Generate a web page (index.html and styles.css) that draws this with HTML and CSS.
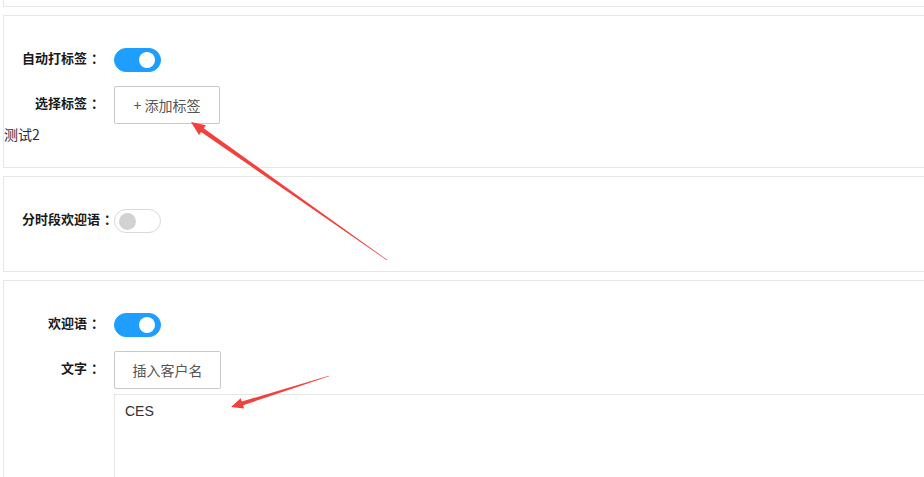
FILE: index.html
```html
<!DOCTYPE html>
<html lang="zh-CN">
  <head>
    <meta charset="UTF-8" />
    <meta name="viewport" content="width=device-width, initial-scale=1.0" />
    <title>欢迎语设置</title>
    <link rel="stylesheet" href="styles.css">
  </head>
  <body>
    <div class="page">
      <div class="card card-cut"></div>

      <div class="card card-tags">
        <div class="form-item">
          <label class="form-label">自动打标签<span class="colon">：</span></label>
          <span class="switch on"><i></i></span>
        </div>
        <div class="form-item">
          <label class="form-label">选择标签<span class="colon">：</span></label>
          <button class="btn btn-tag">+ 添加标签</button>
        </div>
        <div class="tag-text">测试2</div>
      </div>

      <div class="card card-period">
        <div class="form-item">
          <label class="form-label">分时段欢迎语<span class="colon">：</span></label>
          <span class="switch"><i></i></span>
        </div>
      </div>

      <div class="card card-welcome">
        <div class="form-item">
          <label class="form-label">欢迎语<span class="colon">：</span></label>
          <span class="switch on"><i></i></span>
        </div>
        <div class="form-item">
          <label class="form-label">文字<span class="colon">：</span></label>
          <button class="btn btn-name">插入客户名</button>
        </div>
        <div class="form-item form-item-text">
          <label class="form-label"></label>
          <textarea class="welcome-text">CES</textarea>
        </div>
      </div>
    </div>

    <!-- screenshot annotation arrows -->
    <svg class="marks" width="924" height="477" viewBox="0 0 924 477">
      <polygon points="191,122 205.9,125.2 203.7,128.3 387.2,259.8 386.8,260.2 201.1,131.9 199,135" />
      <polygon points="231,407 240.7,398.2 241.8,401.5 328.9,375.7 329.1,376.3 243,405.3 244.1,408.6" />
    </svg>
  </body>
</html>
```

FILE: styles.css
```css
html,
body {
  margin: 0;
  padding: 0;
  overflow: hidden;
  height: 100%;
  background: #fff;
}

body {
  font-family: "Noto Sans CJK SC", "Noto Sans", sans-serif;
  color: #333;
  position: relative;
}

.page {
  padding-left: 3px;
  width: 1100px;
}

.card {
  border: 1px solid #e6e6e6;
  background: #fff;
  margin-bottom: 8px;
}

.card-cut {
  border-top: none;
  height: 6px;
}

.card-tags {
  padding: 26px 0 23px;
}

.card-period {
  padding: 26px 0 32px;
}

.card-welcome {
  padding: 26px 0 0;
}

.form-item {
  display: flex;
  align-items: center;
  min-height: 36px;
  padding-left: 18px;
  margin-bottom: 8px;
}

.form-item:last-child {
  margin-bottom: 0;
}

.card-tags .form-item:nth-child(2) {
  margin-bottom: 0;
}

.card-welcome .form-item:nth-child(2) {
  margin-bottom: 5px;
}

.form-item-text {
  align-items: flex-start;
}

.form-label {
  flex: 0 0 78px;
  width: 78px;
  margin-right: 14px;
  padding-bottom: 4px;
  text-align: right;
  white-space: nowrap;
  font-size: 13px;
  font-weight: bold;
  color: #1a1a1a;
  line-height: 20px;
}

/* full-width colon sits in the middle of its box, as in YaHei */
.colon {
  display: inline-block;
  width: 9px;
  padding-left: 4px;
  text-align: left;
}

.switch {
  box-sizing: border-box;
  display: inline-block;
  position: relative;
  width: 47px;
  height: 24px;
  border: 1px solid #d9d9d9;
  border-radius: 12px;
  background: #fff;
}

.switch i {
  position: absolute;
  top: 3px;
  left: 4px;
  width: 17px;
  height: 17px;
  border-radius: 50%;
  background: #d2d2d2;
}

.switch.on {
  border-color: #1e9fff;
  background: #1e9fff;
}

.switch.on i {
  left: auto;
  right: 5px;
  top: 3px;
  width: 16px;
  height: 16px;
  background: #fff;
}

.btn {
  box-sizing: border-box;
  height: 38px;
  padding: 0;
  border: 1px solid #c9c9c9;
  border-radius: 2px;
  background: #fff;
  color: #555;
  font-family: "Noto Sans CJK SC", "Noto Sans", sans-serif;
  font-size: 14px;
  line-height: 36px;
  text-align: center;
}

.btn-tag {
  width: 106px;
}

.btn-name {
  width: 107px;
}

.tag-text {
  padding-left: 0;
  font-size: 14px;
  line-height: 20px;
  color: #2b2b40;
}

.welcome-text {
  box-sizing: border-box;
  display: block;
  width: 900px;
  height: 160px;
  padding: 6px 10px;
  border: 1px solid #e6e6e6;
  border-radius: 0;
  resize: none;
  outline: none;
  font-family: "Liberation Sans", Arial, sans-serif;
  font-size: 14px;
  line-height: 20px;
  color: #333;
}

.marks {
  position: absolute;
  left: 0;
  top: 0;
  pointer-events: none;
}

.marks polygon {
  fill: #f2403d;
}
```
